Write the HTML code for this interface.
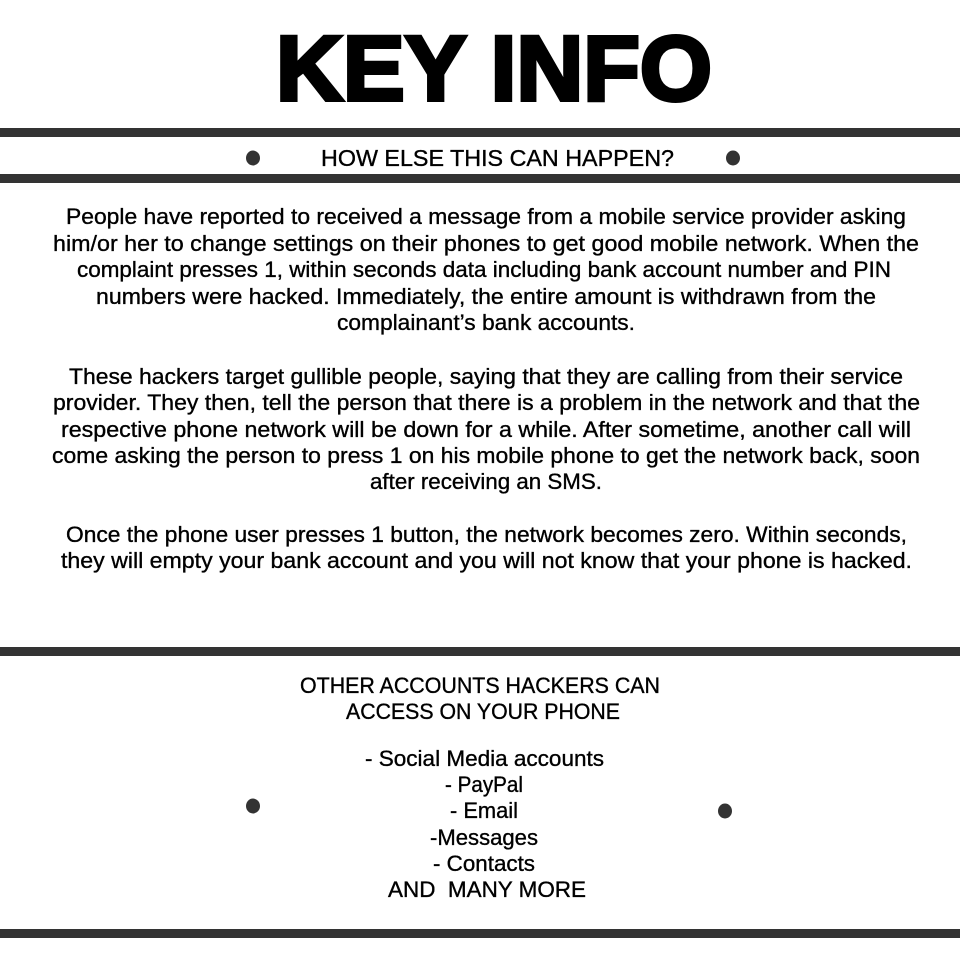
<!DOCTYPE html>
<html><head><meta charset="utf-8"><style>html,body{margin:0;padding:0;background:#fff}svg{display:block}</style></head>
<body>
<svg width="960" height="958" viewBox="0 0 960 958" xmlns="http://www.w3.org/2000/svg" font-family="Liberation Sans, sans-serif" fill="#000">
<rect width="960" height="958" fill="#fff"/>
<text x="276" y="100" font-size="92" font-weight="bold" textLength="436" lengthAdjust="spacingAndGlyphs" stroke="#000" stroke-width="4">KEY INFO</text>
<rect x="0" y="128" width="960" height="9" fill="#333"/>
<rect x="0" y="174" width="960" height="9" fill="#333"/>
<rect x="0" y="647" width="960" height="9" fill="#333"/>
<rect x="0" y="929" width="960" height="9" fill="#333"/>
<ellipse cx="253" cy="158" rx="7" ry="7.5" fill="#333"/>
<ellipse cx="733" cy="158" rx="7" ry="7.5" fill="#333"/>
<ellipse cx="253" cy="806" rx="7" ry="7.5" fill="#333"/>
<ellipse cx="725" cy="811" rx="7" ry="7.5" fill="#333"/>
<g stroke="#000" stroke-width="0.35">
<g font-size="23">
<text x="321" y="166" textLength="353" lengthAdjust="spacingAndGlyphs">HOW ELSE THIS CAN HAPPEN?</text>
</g>
<g font-size="22">
<text x="66" y="224" textLength="840" lengthAdjust="spacingAndGlyphs">People have reported to received a message from a mobile service provider asking</text>
<text x="53" y="251" textLength="866" lengthAdjust="spacingAndGlyphs">him/or her to change settings on their phones to get good mobile network. When the</text>
<text x="77" y="277" textLength="814" lengthAdjust="spacingAndGlyphs">complaint presses 1, within seconds data including bank account number and PIN</text>
<text x="96" y="304" textLength="780" lengthAdjust="spacingAndGlyphs">numbers were hacked. Immediately, the entire amount is withdrawn from the</text>
<text x="337" y="330" textLength="298" lengthAdjust="spacingAndGlyphs">complainant’s bank accounts.</text>
<text x="69" y="384" textLength="834" lengthAdjust="spacingAndGlyphs">These hackers target gullible people, saying that they are calling from their service</text>
<text x="53" y="410" textLength="867" lengthAdjust="spacingAndGlyphs">provider. They then, tell the person that there is a problem in the network and that the</text>
<text x="61" y="437" textLength="850" lengthAdjust="spacingAndGlyphs">respective phone network will be down for a while. After sometime, another call will</text>
<text x="52" y="463" textLength="868" lengthAdjust="spacingAndGlyphs">come asking the person to press 1 on his mobile phone to get the network back, soon</text>
<text x="370" y="489" textLength="232" lengthAdjust="spacingAndGlyphs">after receiving an SMS.</text>
<text x="66" y="542" textLength="841" lengthAdjust="spacingAndGlyphs">Once the phone user presses 1 button, the network becomes zero. Within seconds,</text>
<text x="61" y="568" textLength="851" lengthAdjust="spacingAndGlyphs">they will empty your bank account and you will not know that your phone is hacked.</text>
<text x="300" y="693" textLength="360" lengthAdjust="spacingAndGlyphs">OTHER ACCOUNTS HACKERS CAN</text>
<text x="346" y="719" textLength="274" lengthAdjust="spacingAndGlyphs">ACCESS ON YOUR PHONE</text>
<text x="365" y="766" textLength="239" lengthAdjust="spacingAndGlyphs">- Social Media accounts</text>
<text x="445" y="792" textLength="78" lengthAdjust="spacingAndGlyphs">- PayPal</text>
<text x="450" y="818" textLength="68" lengthAdjust="spacingAndGlyphs">- Email</text>
<text x="430" y="845" textLength="108" lengthAdjust="spacingAndGlyphs">-Messages</text>
<text x="433" y="871" textLength="102" lengthAdjust="spacingAndGlyphs">- Contacts</text>
<text x="388" y="897" textLength="198" lengthAdjust="spacingAndGlyphs" xml:space="preserve">AND  MANY MORE</text>
</g>
</g>
</svg>
</body></html>
